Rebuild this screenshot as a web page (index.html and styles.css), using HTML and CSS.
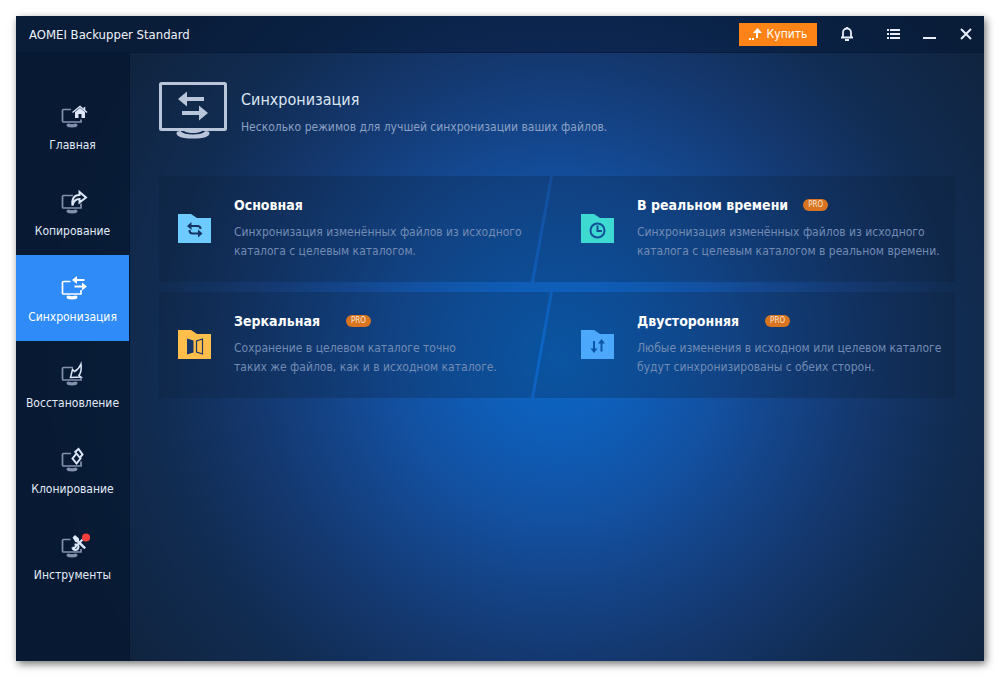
FILE: index.html
```html
<!DOCTYPE html>
<html lang="ru">
<head>
<meta charset="utf-8">
<meta name="viewport" content="width=device-width, initial-scale=1">
<title>AOMEI Backupper Standard</title>
<link rel="stylesheet" href="styles.css">
</head>
<body>
<div class="window">
  <header class="titlebar">
    <span class="app-name">AOMEI Backupper Standard</span>
    <button class="buy" type="button">
      <svg width="14" height="12" viewBox="0 0 14 12" fill="#fff" aria-hidden="true"><path d="M0 10h2v2H0zM3 10h2v2H3zM6 10h3V5h4L8.500 0 4 5h3v5z"/></svg>
      <span>Купить</span>
    </button>
    <button class="tool bell" type="button" aria-label="Уведомления">
      <svg width="14" height="16" viewBox="0 0 14 16" fill="none" stroke="#e6eefa" stroke-width="1.800" aria-hidden="true"><path d="M1 11.500h12M3 11V6.500a4 4 0 0 1 8 0V11M7 3V1"/><path d="M5 14h4" stroke-width="2"/></svg>
    </button>
    <button class="tool menu" type="button" aria-label="Меню">
      <svg width="13" height="10" viewBox="0 0 13 10" fill="#e6eefa" aria-hidden="true"><path d="M0 0h2v2H0zM3 0h10v2H3zM0 4h2v2H0zM3 4h10v2H3zM0 8h2v2H0zM3 8h10v2H3z"/></svg>
    </button>
    <button class="tool minimize" type="button" aria-label="Свернуть">
      <svg width="13" height="12" viewBox="0 0 13 12" fill="#e6eefa" aria-hidden="true"><path d="M0 9h13v2H0z"/></svg>
    </button>
    <button class="tool close" type="button" aria-label="Закрыть">
      <svg width="12" height="12" viewBox="0 0 12 12" stroke="#e6eefa" stroke-width="2" aria-hidden="true"><path d="M1 1l10 10M11 1L1 11"/></svg>
    </button>
  </header>

  <div class="body">
    <nav class="sidebar">
      <a class="nav-item" href="#home">
        <svg class="nav-icon" viewBox="0 0 32 26" aria-hidden="true">
          <path class="screen" d="M14 6.500H6.500q-1 0-1 1V18q0 1 1 1H24V16.500"/><path class="base" d="M9.500 22q0-1.500 2-1.500 3.500 1.300 7 0 2 0 2 1.500 0 2.500-5.500 2.500T9.500 22z"/>
          <path class="mark" d="M23 5l5 4v6h-3.500v-4h-3v4H18V9z"/><path class="line" d="M15.500 9.500L23 3.500l7 6M27.500 4v3"/>
        </svg>
        <span>Главная</span>
      </a>
      <a class="nav-item" href="#backup">
        <svg class="nav-icon" viewBox="0 0 32 26" aria-hidden="true">
          <path class="screen" d="M16 6.500H6.500q-1 0-1 1V18q0 1 1 1H24V14.500"/><path class="base" d="M9.500 22q0-1.500 2-1.500 3.500 1.300 7 0 2 0 2 1.500 0 2.500-5.500 2.500T9.500 22z"/>
          <path class="line heavy" d="M15.500 16.500C14.500 10 17 6 22.500 6V3l6.500 5.500-6.500 5V10C19 10 16.500 12 15.500 16.500z"/>
        </svg>
        <span>Копирование</span>
      </a>
      <a class="nav-item active" href="#sync" aria-current="page">
        <svg class="nav-icon" viewBox="0 0 32 26" aria-hidden="true">
          <path class="screen" d="M13.500 6.500H6.500q-1 0-1 1V18q0 1 1 1H24V15"/><path class="base" d="M9.500 22q0-1.500 2-1.500 3.500 1.300 7 0 2 0 2 1.500 0 2.500-5.500 2.500T9.500 22z"/>
          <path class="mark" d="M15 5l5-4v3h7.500v2H20v3zM30 11.500l-5-4v3h-7.500v2H25v3z"/>
        </svg>
        <span>Синхронизация</span>
      </a>
      <a class="nav-item" href="#restore">
        <svg class="nav-icon" viewBox="0 0 32 26" aria-hidden="true">
          <path class="screen" d="M16 6.500H6.500q-1 0-1 1V18q0 1 1 1H24V17"/><path class="base" d="M9.500 22q0-1.500 2-1.500 3.500 1.300 7 0 2 0 2 1.500 0 2.500-5.500 2.500T9.500 22z"/>
          <path class="line" d="M24 3q1 7-2 11.500l2 1.500-10.500.5 2-8 2 2Q22 8 24 3z"/>
        </svg>
        <span>Восстановление</span>
      </a>
      <a class="nav-item" href="#clone">
        <svg class="nav-icon" viewBox="0 0 32 26" aria-hidden="true">
          <path class="screen" d="M14 6.500H6.500q-1 0-1 1V18q0 1 1 1H24V14.500"/><path class="base" d="M9.500 22q0-1.500 2-1.500 3.500 1.300 7 0 2 0 2 1.500 0 2.500-5.500 2.500T9.500 22z"/>
          <path class="line heavy" d="M19.500 6.500l4 5-4 5-4-5zM17.500 5.500l4-3.500 4 5.500-2.500 3"/>
        </svg>
        <span>Клонирование</span>
      </a>
      <a class="nav-item" href="#tools">
        <svg class="nav-icon" viewBox="0 0 32 26" aria-hidden="true">
          <path class="screen" d="M13.500 6.500H6.500q-1 0-1 1V18q0 1 1 1H24V16"/><path class="base" d="M9.500 22q0-1.500 2-1.500 3.500 1.300 7 0 2 0 2 1.500 0 2.500-5.500 2.500T9.500 22z"/>
          <path class="mark" d="M15.500 4.500L18 2l4 3.500.2 2.300 6.800 6.700-1.700 1.700-7-6.700-2-.5z"/>
          <path class="line heavy" d="M25.500 6.500l-5 5.500"/>
          <path class="line heavy" d="M15.500 14.500l2 .5 1.500-1.500-.5-2q3-.5 3 2.500-.5 3-3.500 3-2.500-.5-2.500-2.500"/>
          <circle cx="29" cy="4.500" r="4" fill="#f7403b"/>
        </svg>
        <span>Инструменты</span>
      </a>
    </nav>

    <main class="content">
      <div class="page-head">
        <svg width="68" height="57" viewBox="0 0 68 57" fill="#b9c6da" aria-hidden="true">
          <rect x="1.500" y="1.500" width="65" height="46" rx="1" fill="none" stroke="#b9c6da" stroke-width="3"/>
          <path d="M19 17l9-7.500V15h17v4H28v5.500zM49 31l-9-7.500V29H23v4h17v5.500z"/>
          <path d="M17.500 51q0-2 4-2 3 3.500 12.500 3.500T46.500 49q4 0 4 2 0 5.500-16.500 5.500T17.500 51z"/>
          <path d="M25 49h18q-3 2-9 2t-9-2z"/>
        </svg>
        <div class="page-text">
          <h1>Синхронизация</h1>
          <p>Несколько режимов для лучшей синхронизации ваших файлов.</p>
        </div>
      </div>

      <div class="modes">
        <a class="card card-left" href="#basic">
          <svg class="folder" viewBox="0 0 33 29" aria-hidden="true"><path fill="#6ecbff" d="M0 0h13l6 4h14v25H0z"/><path fill="none" stroke="#163468" stroke-width="2" d="M12 12h7.500q3 0 3 3M11.500 16q0 3.500 3 3.500H22"/><path fill="#163468" d="M9 12l4.500-4v8zM24.500 19.500l-4.500-4v8z"/></svg>
          <span class="card-text">
            <span class="card-head"><strong>Основная</strong></span>
            <span class="desc">Синхронизация изменённых файлов из исходного<br>каталога с целевым каталогом.</span>
          </span>
        </a>
        <a class="card card-right" href="#realtime">
          <svg class="folder" viewBox="0 0 33 29" aria-hidden="true"><path fill="#3ed9d0" d="M0 0h13l6 4h14v25H0z"/><g fill="none" stroke="#12509a" stroke-width="2"><circle cx="16.500" cy="16.500" r="7"/><path d="M16.500 11.500v5.500h4.500"/></g></svg>
          <span class="card-text">
            <span class="card-head near"><strong>В реальном времени</strong><span class="pro">PRO</span></span>
            <span class="desc">Синхронизация изменённых файлов из исходного<br>каталога с целевым каталогом в реальном времени.</span>
          </span>
        </a>
        <a class="card card-left" href="#mirror">
          <svg class="folder" viewBox="0 0 33 29" aria-hidden="true"><path fill="#ffbf4a" d="M0 0h13l6 4h14v25H0z"/><path fill="#17366a" d="M9 8.500l6.500 2v12L9 24.500z"/><path fill="none" stroke="#17366a" stroke-width="1.200" d="M24.500 9l-6 2v11l6 2z"/></svg>
          <span class="card-text">
            <span class="card-head"><strong>Зеркальная</strong><span class="pro">PRO</span></span>
            <span class="desc">Сохранение в целевом каталоге точно<br>таких же файлов, как и в исходном каталоге.</span>
          </span>
        </a>
        <a class="card card-right" href="#twoway">
          <svg class="folder" viewBox="0 0 33 29" aria-hidden="true"><path fill="#4ba8fa" d="M0 0h13l6 4h14v25H0z"/><path fill="none" stroke="#0b56a8" stroke-width="2" d="M13 11v10M20.500 12v9.500"/><path fill="#0b56a8" d="M9.500 18.500h7L13 23zM17 13.500h7L20.500 9z"/></svg>
          <span class="card-text">
            <span class="card-head"><strong>Двусторонняя</strong><span class="pro">PRO</span></span>
            <span class="desc">Любые изменения в исходном или целевом каталоге<br>будут синхронизированы с обеих сторон.</span>
          </span>
        </a>
      </div>
    </main>
  </div>
</div>
</body>
</html>
```

FILE: styles.css
```css
* { box-sizing: border-box; }

body {
  margin: 0;
  padding: 16px;
  background: #fff;
  font-family: "DejaVu Sans Condensed", "DejaVu Sans", "Noto Sans", sans-serif;
  font-stretch: condensed;
  font-size: 12px;
  color: #e2ebf8;
}

a { color: inherit; text-decoration: none; }
svg { display: block; flex: none; }

.window {
  display: flex;
  flex-direction: column;
  min-height: calc(100vh - 32px);
  background: radial-gradient(circle at 56% 53%, #0b68c8 0, #0f5ab2 100px, #1350a0 165px, #14458a 225px, #14376d 310px, #112c52 400px, #10243f 520px);
  box-shadow: 2px 3px 8px rgba(0, 0, 0, .55);
}

.titlebar {
  display: flex;
  align-items: center;
  height: 37px;
  padding: 0 12px 0 13px;
  background: rgba(2, 20, 48, .45);
  border-bottom: 1px solid rgba(3, 20, 48, .5);
}

.app-name {
  margin-right: auto;
  font-size: 13px;
  color: #eef3fb;
}

button {
  border: 0;
  padding: 0;
  background: none;
  font: inherit;
  color: #fff;
}

.buy {
  display: flex;
  align-items: center;
  justify-content: center;
  gap: 4px;
  width: 78px;
  height: 23px;
  background: #ff8417;
}

.tool {
  display: grid;
  place-items: center;
  height: 24px;
}

.bell { margin-left: 23px; }
.menu { margin-left: 33px; }
.minimize { margin-left: 23px; }
.close { margin-left: 24px; }

.body {
  display: flex;
  flex: 1;
}

.sidebar {
  width: 114px;
  padding-top: 30px;
  background: rgba(4, 20, 44, .6);
  border-right: 1px solid rgba(3, 18, 44, .5);
}

.nav-item {
  display: flex;
  flex-direction: column;
  align-items: center;
  gap: 8px;
  height: 86px;
  padding-top: 20px;
  line-height: 16px;
  --screen: #8391ae;
  --mark: #dce7f8;
}

.nav-item.active {
  background: #2e8bf7;
  --screen: #fff;
  --mark: #fff;
  color: #fff;
}

.nav-icon { width: 32px; height: 26px; overflow: visible; }
.screen { fill: none; stroke: var(--screen); stroke-width: 1.7; }
.base { fill: var(--screen); }
.mark { fill: var(--mark); }
.line { fill: none; stroke: var(--mark); stroke-width: 1.5; }
.heavy { stroke-width: 2; }

.content {
  flex: 1;
  min-width: 0;
  padding: 29px;
}

.page-head {
  display: flex;
  gap: 14px;
}

.page-text { padding-top: 8px; }

h1 {
  margin: 0;
  font-size: 16px;
  font-weight: 400;
  line-height: 20px;
  color: #dce6f4;
}

.page-head p {
  margin: 8px 0 0;
  line-height: 18px;
  color: #8ba0c3;
}

.modes {
  display: grid;
  grid-template-columns: 391fr 405fr;
  row-gap: 10px;
  margin-top: 37px;
}

.card {
  display: flex;
  align-items: center;
  gap: 23px;
  min-height: 106px;
  padding-bottom: 2px;
  background: rgba(10, 32, 56, .26);
}

.card-left {
  padding-left: 19px;
  clip-path: polygon(0 0, 100% 0, calc(100% - 19px) 100%, 0 100%);
}

.card-right {
  margin-left: -16px;
  padding-left: 47px;
  clip-path: polygon(19px 0, 100% 0, 100% 100%, 0 100%);
}

.folder { width: 33px; height: 29px; }

.card-text {
  display: flex;
  flex-direction: column;
  gap: 8px;
}

.card-head {
  display: flex;
  align-items: center;
  gap: 26px;
  line-height: 20px;
  font-size: 14px;
  color: #fff;
}

.near { gap: 15px; }

.pro {
  width: 25px;
  border-radius: 6px;
  background: #d97420;
  font-size: 8px;
  line-height: 12px;
  text-align: center;
  color: #f8e6d4;
}

.desc {
  line-height: 19px;
  color: #728bb3;
  white-space: nowrap;
}
```
